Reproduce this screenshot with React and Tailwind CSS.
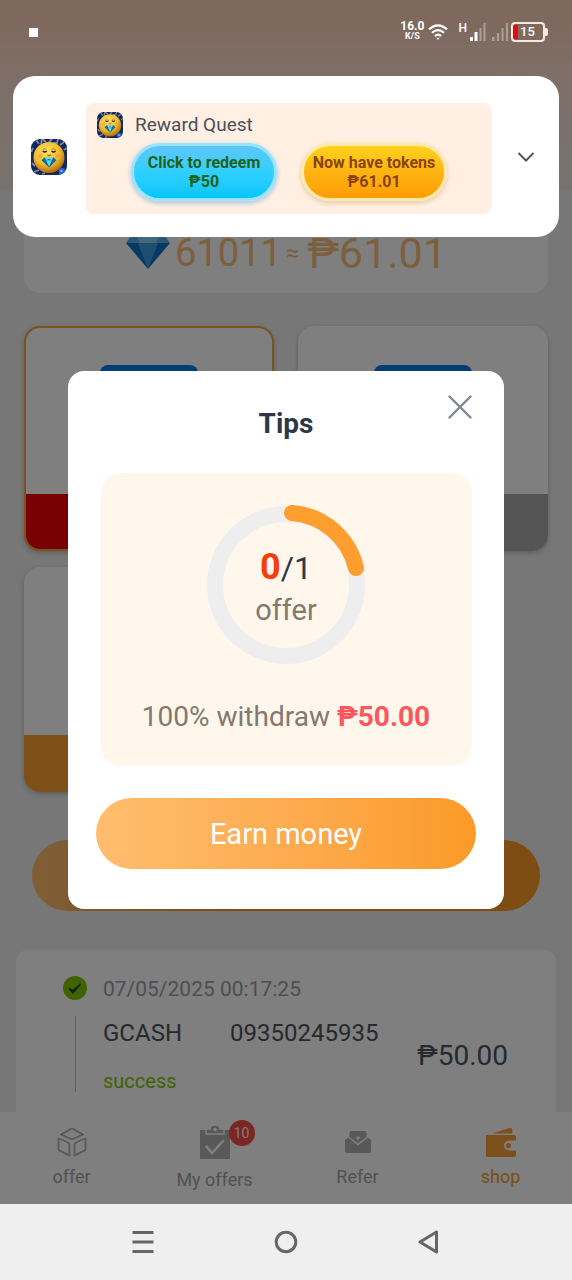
import { useId } from "react";

function MascotIcon({ className }) {
  const id = useId();
  return (
    <svg viewBox="0 0 36 36" className={className} aria-hidden="true">
      <defs>
        <radialGradient id={id + "f"} cx="0.42" cy="0.32" r="0.7">
          <stop offset="0" stopColor="#ffe468" />
          <stop offset="0.6" stopColor="#f3b92b" />
          <stop offset="1" stopColor="#a9660d" />
        </radialGradient>
        <clipPath id={id + "c"}>
          <rect width="36" height="36" rx="9" />
        </clipPath>
      </defs>
      <g clipPath={`url(#${id}c)`}>
        <rect width="36" height="36" fill="#14275a" />
        <g fill="none" stroke="#7f89a3" strokeWidth="1.8">
          <path d="M5 1l3 4M10 5l1-5 4 3M18 3l3-3M22 4h4l1-4M29 6l4-3M33 11l3-2M2 9l-2 4M1 24l3 3M3 33l5-2M11 35l3-1" />
        </g>
        <circle cx="18" cy="18.500" r="15.500" fill={`url(#${id}f)`} />
        <path d="M11.500 10.500q2-1.800 4 0M20.500 10.500q2-1.800 4 0" stroke="#b07a1c" strokeWidth="0.9" fill="none" />
        <path d="M11.800 12q2 2 4 0M20.600 12q2 2 4 0" stroke="#33230f" strokeWidth="1.500" fill="none" />
        <circle cx="9.500" cy="17" r="2.200" fill="#f39a4a" opacity="0.7" />
        <circle cx="26.500" cy="17" r="2.200" fill="#f39a4a" opacity="0.7" />
        <path d="M16.200 15.800q1.900 1.800 3.800 0" stroke="#c45c16" strokeWidth="1.300" fill="none" />
        <path d="M10.500 21.200l3-3 4.500 2 4.500-2 3 3-7.500 7.200z" fill="#0e6f98" />
        <path d="M13.500 18.600l2 2.600 2.500-1.400 2.500 1.400 2-2.600M15.200 21.200L18 27.800l2.800-6.600z" fill="#63d8ec" />
        <circle cx="31" cy="32.500" r="3.400" fill="#1d62e0" />
        <circle cx="30.500" cy="32" r="1.300" fill="#7fb6ff" />
      </g>
    </svg>
  );
}

function StatusBar() {
  return (
    <header className="relative z-20 flex h-16 items-center justify-between pr-6 pl-7 text-white">
      <span className="ml-px size-[9px] bg-white" />
      <div className="flex items-center">
        <div className="flex flex-col items-center pb-1 font-bold">
          <span className="text-xs leading-3">16.0</span>
          <span className="text-[9px] leading-2">K/S</span>
        </div>
        <svg viewBox="0 0 20 18" className="ml-1 h-[18px] w-5" fill="none" stroke="white" strokeWidth="2.2" aria-hidden="true">
          <path d="M1 6.300q9-8 18 0M4 9.800q6-5.400 12 0M6.900 13q3.100-2.800 6.200 0" />
          <path d="M8.200 14.800h3.600L10 17z" fill="white" stroke="none" />
        </svg>
        <span className="ml-2.5 -mt-2 text-xs font-medium">H</span>
        <svg viewBox="0 0 42 20" className="ml-0.5 h-5 w-[42px]" fill="white" aria-hidden="true">
          <path d="M1 15h3v4H1zM5.500 10h3v9h-3z" />
          <path d="M10.500 6h2v13h-2zM14.500 1h2v18h-2zM23 15h2.500v4H23zM28 11h2v8h-2zM32.500 6h2v13h-2zM37 1h2v18h-2z" opacity="0.35" />
        </svg>
        <div className="flex h-5 w-[34px] items-center rounded-[4px] border-2 border-[#f5e8e0]">
          <span className="h-3.5 w-[5px] rounded-l-[2px] bg-[#e80909]" />
          <span className="ml-0.5 text-[13px] leading-4 font-medium">15</span>
        </div>
        <span className="h-2 w-[3px] rounded-r-[2px] bg-[#f5e8e0]" />
      </div>
    </header>
  );
}

function Notification() {
  return (
    <section className="absolute inset-x-[13px] top-19 z-30 flex h-[161px] items-center rounded-[22px] bg-white pl-[18px]">
      <MascotIcon className="size-9 shrink-0" />
      <div className="mt-1 ml-[19px] flex h-[111px] flex-1 flex-col rounded-lg bg-[#fff0e3] pt-2 pl-[11px]">
        <div className="flex items-center gap-3">
          <MascotIcon className="size-[26px]" />
          <h2 className="text-[19px] leading-7 text-[#4a4f59]">Reward Quest</h2>
        </div>
        <div className="mt-1 ml-[34px] flex gap-6">
          <button className="flex h-[58px] w-[146px] flex-col items-center justify-center rounded-full border-3 border-[#98e4fb] bg-linear-to-b from-[#5cc6fb] via-[#2fd0ff] to-[#00c6fb] text-base leading-[19px] font-bold text-[#1f6217] shadow-[0_2px_4px_1px_#bccbe2]">
            <span className="whitespace-nowrap">Click to redeem</span>
            <span>₱50</span>
          </button>
          <button className="flex h-[58px] w-[146px] flex-col items-center justify-center rounded-full border-3 border-[#ffe9a8] bg-linear-to-b from-[#ffd21c] via-[#ffb412] to-[#ff9c05] text-base leading-[19px] font-bold text-[#8a4306] shadow-[0_2px_4px_1px_#ecd2b2]">
            <span className="whitespace-nowrap">Now have tokens</span>
            <span>₱61.01</span>
          </button>
        </div>
      </div>
      <button aria-label="Expand" className="flex w-[67px] justify-center">
        <svg viewBox="0 0 18 12" className="h-3 w-[18px]" fill="none" stroke="#55565a" strokeWidth="2" aria-hidden="true">
          <path d="M1.500 2L9 9.500 16.500 2" />
        </svg>
      </button>
    </section>
  );
}

function Balance() {
  return (
    <section className="mx-6 mt-12 flex h-[181px] items-end justify-center rounded-2xl bg-white pb-4 text-[#f9c07a]">
      <svg viewBox="0 0 46 40" className="mb-2 h-10 w-[46px]" aria-hidden="true">
        <path d="M10 2h26l9 12H1z" fill="#8fd0f5" />
        <path d="M10 2l5 12H1zM36 2l-5 12h14z" fill="#4eb0ee" />
        <path d="M1 14h44L23 40z" fill="#0c74c8" />
        <path d="M13 14h20L23 40z" fill="#3a9ee0" />
      </svg>
      <div className="ml-1 flex items-center leading-12">
        <span className="text-[38px]">61011</span>
        <span className="ml-1 text-2xl">≈</span>
        <span className="ml-2 text-[43px]">₱61.01</span>
      </div>
    </section>
  );
}

function PayoutCard({ band, selected, logo }) {
  return (
    <button
      className={`flex h-[225px] flex-col items-center overflow-hidden rounded-2xl bg-white shadow-[0_2px_5px_#bbbbbb] ${
        selected ? "border-2 border-[#f6a435] pt-[37px]" : "pt-[39px]"
      }`}
    >
      {logo && <span className="h-24 w-[98px] rounded-lg bg-[#0a78ee]" />}
      <span className={`mt-auto w-full ${selected ? "h-[55px]" : "h-[57px]"} ${band}`} />
    </button>
  );
}

function HistoryEntry() {
  return (
    <section className="mx-4 mt-[39px] flex flex-1 rounded-t-xl bg-white pr-12 pl-12 text-[#4d535d]">
      <div className="flex w-[22px] flex-col items-center pt-[26px]">
        <svg viewBox="0 0 24 24" className="size-6 shrink-0" aria-hidden="true">
          <circle cx="12" cy="12" r="12" fill="#82c400" />
          <path d="M6 12.500l4 4.500 7.500-9-7.500 6.500z" fill="#1c4038" stroke="#1c4038" strokeWidth="1.200" />
        </svg>
        <span className="mt-4 h-[76px] w-px bg-[#c4c4c8]" />
      </div>
      <div className="flex-1 pt-[25px] pl-[17px]">
        <p className="text-[21px] leading-7 text-[#9b9da3]">07/05/2025 00:17:25</p>
        <p className="mt-4 flex gap-12 text-2xl leading-7 whitespace-nowrap">
          <span>GCASH</span>
          <span>09350245935</span>
        </p>
        <p className="mt-5 text-xl leading-7 text-[#82c400]">success</p>
      </div>
      <p className="pt-[90px] text-[28px] leading-8">₱50.00</p>
    </section>
  );
}

function BoxIcon() {
  return (
    <svg viewBox="0 0 30 30" className="size-[30px]" fill="none" stroke="#b0b0b0" strokeWidth="1.800" strokeLinejoin="round" aria-hidden="true">
      <path d="M15 1.500L26 7.500 15 12.500 4 7.500zM1.500 11.500q5 1.500 10 4.500 1 .7 1 2v10.500l-10-5q-1-.5-1-1.500zM28.500 11.500q-5 1.500-10 4.500-1 .7-1 2v10.500l10-5q1-.5 1-1.500z" />
    </svg>
  );
}

function ClipboardIcon() {
  return (
    <svg viewBox="0 0 32 36" className="h-9 w-8" aria-hidden="true">
      <path d="M1 6h30v29H1z" fill="#b0b0b0" />
      <path d="M7 10V5h4q0-4 5-4t5 4h4v5z" fill="#b0b0b0" stroke="white" strokeWidth="1.500" />
      <circle cx="16" cy="5.500" r="1.800" fill="white" />
      <path d="M7 22l6 7 12-13" fill="none" stroke="white" strokeWidth="2.500" />
    </svg>
  );
}

function MailIcon() {
  return (
    <svg viewBox="0 0 26 24" className="h-6 w-[26px]" fill="#b0b0b0" aria-hidden="true">
      <path d="M0 10l3-2.500L13 15.500l10-8L26 10v11q0 2-2 2H2q-2 0-2-2z" />
      <path d="M4.500 7V3q0-2 2-2h13q2 0 2 2v4L13 13.500z" />
      <circle cx="13" cy="8" r="1.800" fill="white" />
    </svg>
  );
}

function WalletIcon() {
  return (
    <svg viewBox="0 0 30 30" className="size-[30px]" fill="#f9a138" aria-hidden="true">
      <path d="M6 6.500L24 1q2-.5 2.200 1.500L26.500 6.500z" />
      <path d="M0 8h28q2 0 2 2v3.500h-7a5 5 0 0 0 0 10h7V28q0 2-2 2H2q-2 0-2-2z" />
      <circle cx="22.500" cy="18.500" r="2.600" />
    </svg>
  );
}

function Tab({ icon, label, badge, active }) {
  return (
    <a href={"#" + label.replace(" ", "-").toLowerCase()} className={`flex flex-col items-center ${badge ? "pt-3" : "pt-[15px]"} ${active ? "text-[#f39c2d]" : "text-[#a3a3a3]"}`}>
      <span className={`relative flex items-center justify-center ${badge ? "h-9" : "h-[30px]"}`}>
        {icon}
        {badge && (
          <span className="absolute -top-1 left-[30px] flex size-[26px] items-center justify-center rounded-full bg-[#f64c43] text-sm text-[#fff0f0]">{badge}</span>
        )}
      </span>
      <span className="mt-2 text-lg leading-6">{label}</span>
    </a>
  );
}

function TipsDialog() {
  return (
    <div className="absolute inset-0 z-10 bg-black/50 px-[68px] pt-[371px]">
      <div role="dialog" aria-labelledby="tips-title" className="relative flex h-[538px] flex-col items-center rounded-2xl bg-white px-7">
        <button aria-label="Close" className="absolute top-6 right-8">
          <svg viewBox="0 0 24 24" className="size-6" stroke="#7f8794" strokeWidth="2.400" strokeLinecap="round" aria-hidden="true">
            <path d="M1.500 1.500l21 21M22.500 1.500l-21 21" />
          </svg>
        </button>
        <h1 id="tips-title" className="mt-9 text-[28px] leading-[34px] font-bold text-[#2d3748]">Tips</h1>
        <div className="mt-8 flex h-[293px] w-[371px] max-w-full flex-col items-center rounded-[20px] bg-[#fff7ec] pt-8">
          <div className="relative flex size-40 flex-col items-center pt-[42px]">
            <svg viewBox="0 0 160 160" className="absolute inset-0 size-full" fill="none" strokeWidth="16" aria-hidden="true">
              <circle cx="80" cy="80" r="71" stroke="#eeeeef" />
              <path d="M86 8A71 71 0 0 1 150 63" stroke="#fd9e2e" strokeLinecap="round" />
            </svg>
            <p className="relative text-[32px] leading-10 text-[#2d3748]">
              <strong className="text-[36px] text-[#f83d08]">0</strong>/1
            </p>
            <p className="relative mt-1 text-[29px] leading-9 text-[#85786e]">offer</p>
          </div>
          <p className="mt-[34px] text-[28px] leading-9 whitespace-nowrap text-[#85786e]">
            100% withdraw <strong className="text-[#fb575c]">₱50.00</strong>
          </p>
        </div>
        <button className="mt-8 h-[71px] w-full rounded-full bg-linear-to-r from-[#ffbd6e] to-[#fb9a26] pt-0.5 text-[29px] text-white">Earn money</button>
      </div>
    </div>
  );
}

export default function App() {
  return (
    <div className="flex min-h-screen flex-col font-['Roboto',sans-serif]">
      <div className="relative flex flex-1 flex-col bg-[#eeeeee] bg-[linear-gradient(#ffd0b8_0px,#ffd2bc_20px,#fddccc_64px,#f6e2d8_120px,#f0e6e0_190px,#eeeeee_190px)]">
        <StatusBar />
        <Balance />
        <main className="flex flex-1 flex-col">
          <div className="mx-6 mt-[33px] grid grid-cols-2 gap-x-6 gap-y-4">
            <PayoutCard band="bg-[#ee0000]" selected logo />
            <PayoutCard band="bg-[#a8a8a8]" logo />
            <PayoutCard band="bg-[#f9a02c]" />
          </div>
          <div className="mx-8 mt-12 flex">
            <button aria-label="Withdraw" className="h-[71px] flex-1 rounded-full bg-linear-to-r from-[#ffbd6e] via-[#fb9a26] via-40% to-[#fb9a26]" />
          </div>
          <HistoryEntry />
        </main>
        <nav className="grid h-23 grid-cols-4 bg-white">
          <Tab icon={<BoxIcon />} label="offer" />
          <Tab icon={<ClipboardIcon />} label="My offers" badge="10" />
          <Tab icon={<MailIcon />} label="Refer" />
          <Tab icon={<WalletIcon />} label="shop" active />
        </nav>
        <TipsDialog />
        <Notification />
      </div>
      <footer className="flex h-19 items-center justify-center gap-[119px] bg-[#efefef]">
        <button aria-label="Recent apps">
          <svg viewBox="0 0 24 24" className="size-6" stroke="#666666" strokeWidth="3" aria-hidden="true">
            <path d="M1.500 2.500h21M1.500 12h21M1.500 21.500h21" />
          </svg>
        </button>
        <button aria-label="Home">
          <svg viewBox="0 0 24 24" className="size-6" stroke="#666666" strokeWidth="3" fill="none" aria-hidden="true">
            <circle cx="12" cy="12" r="9.800" />
          </svg>
        </button>
        <button aria-label="Back">
          <svg viewBox="0 0 24 24" className="size-6" stroke="#666666" strokeWidth="3" strokeLinejoin="round" fill="none" aria-hidden="true">
            <path d="M19.500 2v20L3 12z" />
          </svg>
        </button>
      </footer>
    </div>
  );
}
